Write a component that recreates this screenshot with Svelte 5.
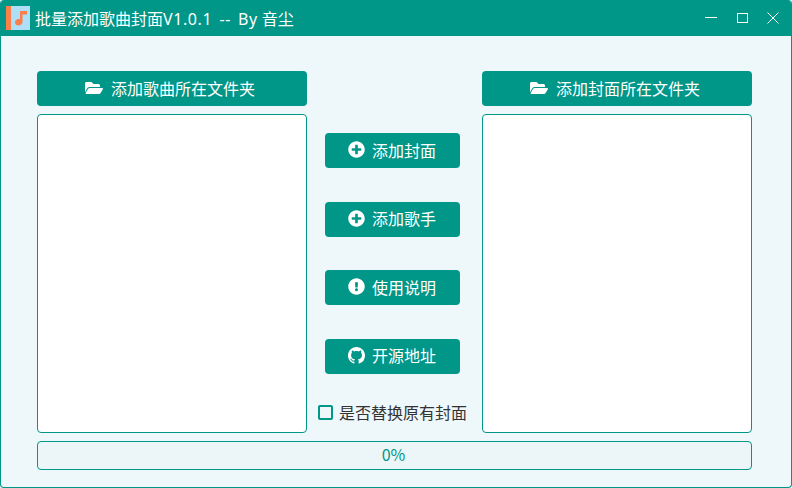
<script>
  const folderPath = "M572.694 292.093L500.27 416.248A63.997 63.997 0 0 1 444.989 448H45.025c-18.523 0-30.064-20.093-20.731-36.093l72.424-124.155A64 64 0 0 1 152 256h399.964c18.523 0 30.064 20.093 20.73 36.093zM152 224h328v-48c0-26.51-21.49-48-48-48H272l-64-64H48C21.49 64 0 85.49 0 112v278.046l69.077-118.418C86.214 242.25 117.989 224 152 224z"
  const icons = {
    plus: { box: "0 0 512 512", d: "M256 8C119 8 8 119 8 256s111 248 248 248 248-111 248-248S393 8 256 8zm144 276c0 6.6-5.4 12-12 12h-92v92c0 6.6-5.4 12-12 12h-56c-6.6 0-12-5.4-12-12v-92h-92c-6.6 0-12-5.4-12-12v-56c0-6.6 5.4-12 12-12h92v-92c0-6.6 5.4-12 12-12h56c6.6 0 12 5.4 12 12v92h92c6.6 0 12 5.4 12 12v56z" },
    info: { box: "0 0 512 512", d: "M504 256c0 136.997-111.043 248-248 248S8 392.997 8 256C8 119.083 119.043 8 256 8s248 111.083 248 248zm-248 50c-25.405 0-46 20.595-46 46s20.595 46 46 46 46-20.595 46-46-20.595-46-46-46zm-43.673-165.346l7.418 136c.347 6.364 5.609 11.346 11.982 11.346h48.546c6.373 0 11.635-4.982 11.982-11.346l7.418-136c.375-6.874-5.098-12.654-11.982-12.654h-63.383c-6.884 0-12.356 5.78-11.981 12.654z" },
    github: { box: "0 0 16 16", d: "M8 0C3.58 0 0 3.58 0 8c0 3.54 2.29 6.53 5.47 7.59.4.07.55-.17.55-.38 0-.19-.01-.82-.01-1.49-2.01.37-2.53-.49-2.69-.94-.09-.23-.48-.94-.82-1.13-.28-.15-.68-.52-.01-.53.63-.01 1.08.58 1.23.82.72 1.21 1.87.87 2.33.66.07-.52.28-.87.51-1.07-1.78-.2-3.64-.89-3.64-3.95 0-.87.31-1.59.82-2.15-.08-.2-.36-1.02.08-2.12 0 0 .67-.21 2.2.82.64-.18 1.32-.27 2-.27.68 0 1.36.09 2 .27 1.53-1.04 2.2-.82 2.2-.82.44 1.1.16 1.92.08 2.12.51.56.82 1.27.82 2.15 0 3.07-1.87 3.75-3.65 3.95.29.25.54.73.54 1.48 0 1.07-.01 1.93-.01 2.2 0 .21.15.46.55.38A8.013 8.013 0 0016 8c0-4.42-3.58-8-8-8z" }
  }
  const actions = [
    { label: "添加封面", icon: "plus" },
    { label: "添加歌手", icon: "plus" },
    { label: "使用说明", icon: "info" },
    { label: "开源地址", icon: "github" }
  ]
  let replace = $state(false)
</script>

<div class="window">
  <header class="titlebar">
    <div class="logo">
      <svg width="24" height="24" viewBox="0 0 24 24">
        <rect width="24" height="24" fill="#aedff7"/>
        <rect width="5" height="24" fill="#f9804a"/>
        <path d="M14 5H21V8.5H16.5V16C16.5 18 14.5 19.5 12.3 19.5C10.3 19.5 9 18 9 16.3C9 14.4 10.6 13 12.5 13C13 13 13.6 13.1 14 13.3Z" fill="#f9804a"/>
      </svg>
    </div>
    <span class="title">批量添加歌曲封面<span class="latin">V1.0.1 -- By</span>音尘</span>
    <div class="controls">
      <svg width="14" height="14" viewBox="0 0 14 14"><path d="M1 6.5H13" stroke="#fff" fill="none"/></svg>
      <svg width="14" height="14" viewBox="0 0 14 14"><rect x="2.5" y="2.5" width="10" height="9" stroke="#fff" fill="none"/></svg>
      <svg width="14" height="14" viewBox="0 0 14 14"><path d="M1.5 1.5L12.5 12.5M12.5 1.5L1.5 12.5" stroke="#fff" fill="none"/></svg>
    </div>
  </header>

  <main class="content">
    <div class="columns">
      <section class="column">
        <button class="btn">
          <svg class="icon" viewBox="0 0 576 512"><path d={folderPath}/></svg>
          添加歌曲所在文件夹
        </button>
        <div class="list"></div>
      </section>

      <section class="middle">
        {#each actions as action}
          <button class="btn action">
            <svg class="icon small" viewBox={icons[action.icon].box}><path d={icons[action.icon].d}/></svg>
            {action.label}
          </button>
        {/each}
        <label class="check">
          <input type="checkbox" bind:checked={replace}/>
          <span class="box"></span>
          是否替换原有封面
        </label>
      </section>

      <section class="column">
        <button class="btn">
          <svg class="icon" viewBox="0 0 576 512"><path d={folderPath}/></svg>
          添加封面所在文件夹
        </button>
        <div class="list"></div>
      </section>
    </div>
    <div class="progress">0%</div>
  </main>
</div>

<style>
  :global(body) {
    margin: 0;
    background: #eef7f9;
  }

  .window {
    box-sizing: border-box;
    width: 792px;
    height: 488px;
    display: flex;
    flex-direction: column;
    background: #eef7f9;
    border: 1px solid #009688;
    border-top: none;
    border-radius: 4px;
    overflow: hidden;
    font-family: "Noto Sans CJK SC", "Noto Sans", sans-serif;
    font-size: 16px;
  }

  .titlebar {
    height: 36px;
    flex: none;
    display: flex;
    align-items: center;
    background: #009688;
    color: #fff;
    padding-left: 5px;
  }

  .logo {
    width: 24px;
    height: 24px;
    margin-right: 5px;
  }

  .logo svg {
    display: block;
  }

  .title {
    white-space: pre;
    line-height: 24px;
  }

  .latin {
    font-family: "Noto Sans", "Noto Sans CJK SC", sans-serif;
    letter-spacing: 0.6px;
    word-spacing: 2.4px;
    margin-right: 4px;
  }

  .controls {
    margin-left: auto;
    display: flex;
    gap: 17px;
    padding-right: 11px;
  }

  .controls svg {
    display: block;
  }

  .content {
    flex: 1;
    padding: 35px 39px 0 36px;
  }

  .columns {
    display: flex;
    height: 362px;
  }

  .column {
    width: 270px;
    flex: none;
    display: flex;
    flex-direction: column;
    gap: 8px;
  }

  .btn {
    box-sizing: border-box;
    height: 35px;
    flex: none;
    display: flex;
    align-items: center;
    justify-content: center;
    gap: 8px;
    padding: 0 4px 2px 0;
    background: #009688;
    color: #fff;
    border: none;
    border-radius: 4px;
    font: inherit;
    cursor: pointer;
  }

  .icon {
    width: 18px;
    height: 16px;
    fill: #fff;
  }

  .icon.small {
    width: 17px;
    height: 17px;
  }

  .list {
    box-sizing: border-box;
    flex: 1;
    background: #fff;
    border: 1px solid #009688;
    border-radius: 4px;
  }

  .middle {
    box-sizing: border-box;
    width: 175px;
    flex: none;
    display: flex;
    flex-direction: column;
    align-items: center;
    padding: 62px 4px 0 0;
    gap: 33.67px;
  }

  .action {
    width: 135px;
    gap: 7px;
    padding-right: 1px;
  }

  .check {
    display: flex;
    align-items: center;
    gap: 6px;
    margin-top: -7px;
    color: #333;
    line-height: 22px;
    white-space: nowrap;
  }

  .check input {
    display: none;
  }

  .box {
    box-sizing: border-box;
    width: 15px;
    height: 15px;
    margin-top: 2px;
    border: 2px solid #009688;
    border-radius: 2px;
  }

  .progress {
    box-sizing: border-box;
    height: 29px;
    margin-top: 8px;
    padding-right: 2px;
    border: 1px solid #009688;
    border-radius: 4px;
    background: #ecf6f8;
    color: #009688;
    text-align: center;
    line-height: 25px;
  }
</style>
